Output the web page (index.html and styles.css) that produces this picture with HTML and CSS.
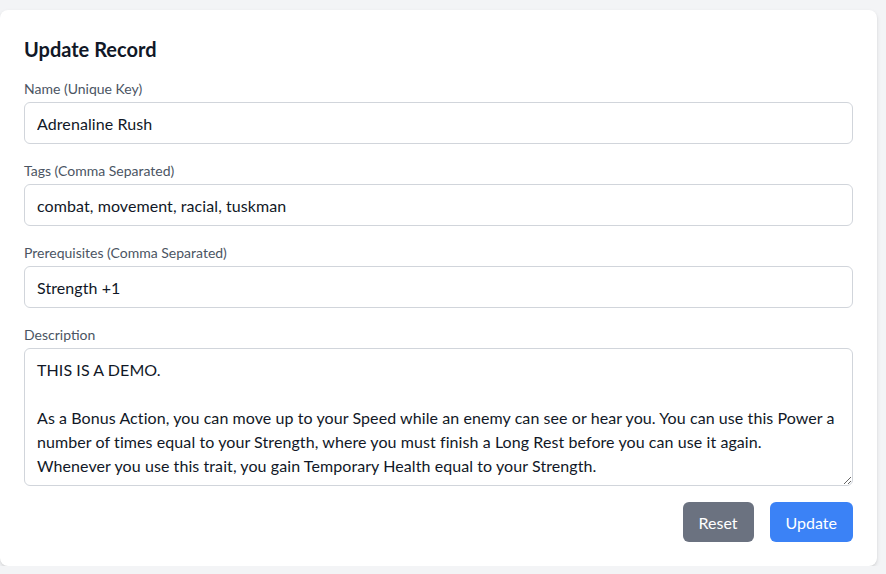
FILE: index.html
```html
<!DOCTYPE html>
<html lang="en">
<head>
<meta charset="utf-8">
<title>Update Record</title>
<link rel="stylesheet" href="styles.css">
</head>
<body>
<div class="card">
  <h2 class="title">Update Record</h2>
  <div class="field">
    <label class="label">Name (Unique Key)</label>
    <input class="input" type="text" value="Adrenaline Rush">
  </div>
  <div class="field">
    <label class="label">Tags (Comma Separated)</label>
    <input class="input" type="text" value="combat, movement, racial, tuskman">
  </div>
  <div class="field">
    <label class="label">Prerequisites (Comma Separated)</label>
    <input class="input" type="text" value="Strength +1">
  </div>
  <div class="field">
    <label class="label">Description</label>
    <textarea class="input textarea" rows="5">THIS IS A DEMO.

As a Bonus Action, you can move up to your Speed while an enemy can see or hear you. You can use this Power a number of times equal to your Strength, where you must finish a Long Rest before you can use it again.
Whenever you use this trait, you gain Temporary Health equal to your Strength.</textarea>
  </div>
  <div class="actions">
    <button class="btn btn-gray" type="button">Reset</button>
    <button class="btn btn-blue" type="button">Update</button>
  </div>
</div>
</body>
</html>
```
FILE: styles.css
```css
* { box-sizing: border-box; }
html, body { margin: 0; padding: 0; }
body {
  background: #f3f4f6;
  font-family: Lato, "Noto Sans", sans-serif;
  color: #111827;
  padding-top: 10px;
}
.card {
  width: 877px;
  height: 556px;
  background: #fff;
  border-radius: 8px;
  box-shadow: 0 2px 4px rgba(0,0,0,0.10), 0 1px 2px rgba(0,0,0,0.06);
  padding: 24px;
}
.title {
  margin: 0 0 15px;
  padding-top: 1px;
  font-size: 20px;
  line-height: 28px;
  font-weight: 700;
  color: #111827;
}
.field { margin-bottom: 16px; }
.label {
  display: block;
  font-size: 14px;
  line-height: 20px;
  color: #4b5563;
  padding-top: 1px;
  margin-bottom: 3px;
}
.input {
  display: block;
  width: 100%;
  font-family: inherit;
  font-size: 16px;
  line-height: 24px;
  letter-spacing: 0.08px;
  color: #111827;
  padding: 9px 12px 7px;
  border: 1px solid #d1d5db;
  border-radius: 6px;
  background: #fff;
  outline: none;
  margin: 0;
}
.textarea {
  height: 138px;
  resize: vertical;
}
.actions {
  display: flex;
  justify-content: flex-end;
  gap: 16px;
}
.btn {
  font-family: inherit;
  font-size: 16px;
  line-height: 24px;
  padding: 9px 16px 7px;
  border: none;
  border-radius: 6px;
  color: #fff;
  cursor: pointer;
}
.btn-gray { background: #6b7280; }
.btn-blue { background: #3b82f6; }
```
